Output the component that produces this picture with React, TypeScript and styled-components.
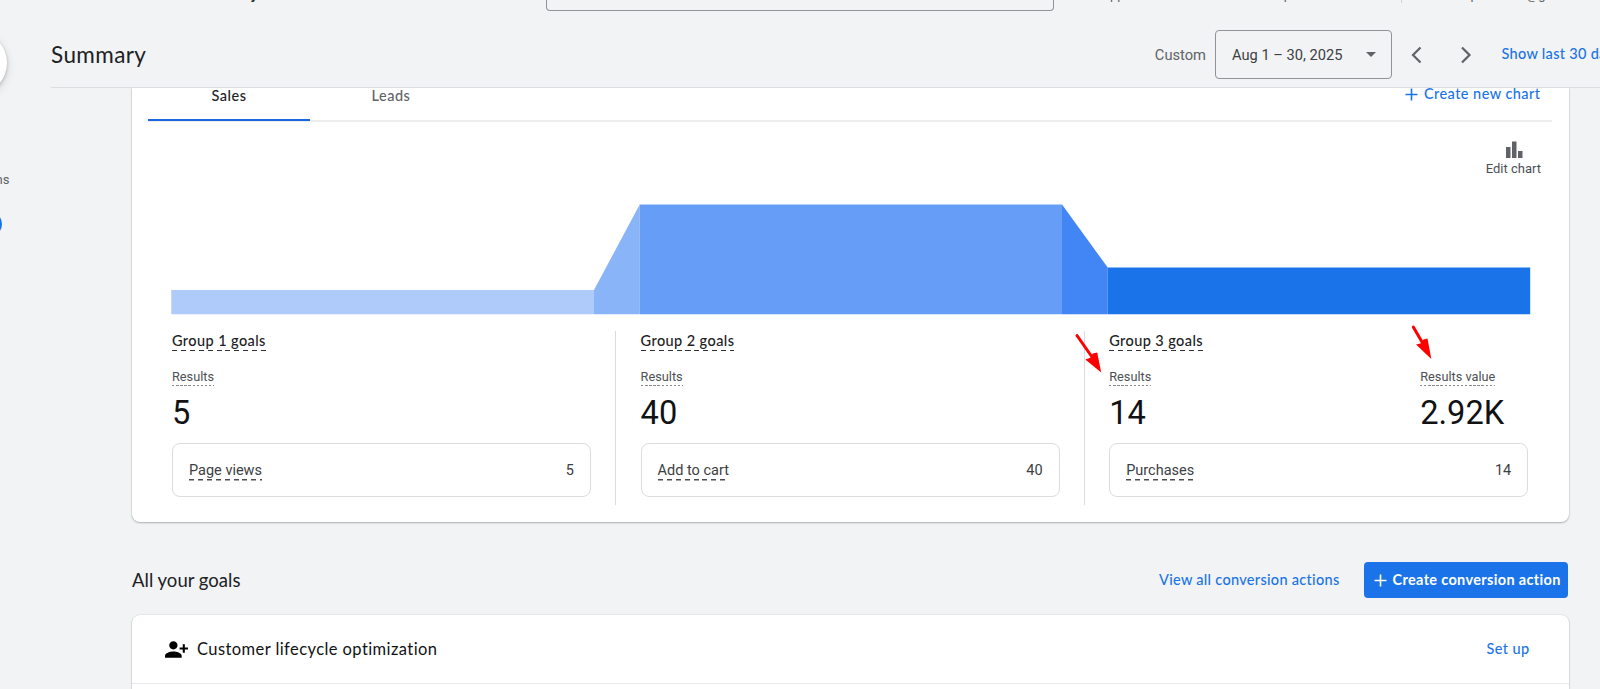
import React from 'react';
import styled, { createGlobalStyle } from 'styled-components';
import { MdPersonAddAlt1 } from 'react-icons/md';

const GlobalStyle = createGlobalStyle`
  *, *::before, *::after { box-sizing: border-box; }
  body { margin: 0; background: #f1f3f4; overflow: hidden; }
`;

const display = "Lato, 'Open Sans', sans-serif";
const blue = '#1a73e8';

const Page = styled.div`
  display: flex;
  width: 1600px;
  height: 689px;
  overflow: hidden;
  position: relative;
  background: #f1f3f4;
  color: #3c4043;
  font-family: Roboto, sans-serif;
  white-space: nowrap;
`;

const Rail = styled.nav`
  flex: none;
  width: 51px;
  padding-top: 31px;
  display: flex;
  flex-direction: column;
  align-items: flex-start;
`;

const RailButton = styled.div`
  width: 64px;
  height: 64px;
  margin-left: -57px;
  border-radius: 50%;
  background: #fff;
  box-shadow: 0 1px 3px rgba(60, 64, 67, 0.3), 0 3px 8px rgba(60, 64, 67, 0.18);
`;

const RailLabel = styled.span`
  width: 60px;
  margin: 77px 0 0 -50.5px;
  text-align: right;
  font-size: 13px;
  line-height: 16px;
  color: #5f6368;
`;

const RailBadge = styled.span`
  width: 24px;
  height: 24px;
  margin: 24px 0 0 -22px;
  border-radius: 50%;
  background: ${blue};
`;

const Main = styled.main`
  flex: 1;
  min-width: 0;
  display: flex;
  flex-direction: column;
`;

const AppBar = styled.div`
  height: 12px;
  flex: none;
  display: flex;
  align-items: flex-end;
  padding-bottom: 1px;
`;

const AppBarText = styled.span<{ $w: number; $bold?: boolean }>`
  width: ${p => p.$w}px;
  flex: none;
  align-self: flex-start;
  height: 12px;
  margin-top: -12px;
  font-size: 13px;
  line-height: 14px;
  font-weight: ${p => (p.$bold ? 700 : 400)};
  color: ${p => (p.$bold ? '#202124' : '#5f6368')};
`;

const AccountRule = styled.span`
  align-self: flex-start;
  width: 1px;
  height: 3px;
  background: #d0d3d6;
`;

const SearchBox = styled.div`
  width: 507.5px;
  height: 11px;
  flex: none;
  border: 1px solid #8f9296;
  border-top: 0;
  border-radius: 0 0 4px 4px;
`;

const Header = styled.header`
  height: 76px;
  flex: none;
  display: flex;
  align-items: center;
  border-bottom: 1px solid #dadce0;
`;

const Title = styled.h1`
  flex: 1;
  margin: 0;
  padding-top: 7px;
  height: 75px;
  font: 400 22.5px/71px ${display};
  letter-spacing: 0.4px;
  color: #202124;
`;

const RangeKind = styled.span`
  margin: 10px 9px 0 0;
  font-size: 14.7px;
  line-height: 18px;
  color: #5f6368;
`;

const DateField = styled.div`
  width: 177px;
  height: 49px;
  margin-top: 10px;
  padding: 0 15px 0 16px;
  display: flex;
  align-items: center;
  justify-content: space-between;
  border: 1px solid #8f9296;
  border-radius: 4px;
  font-size: 14.65px;
  color: #3c4043;
`;

const Pager = styled.div`
  display: flex;
  gap: 33px;
  margin: 10px 0 0 16.5px;
`;

const TextLink = styled.a<{ $spacing?: number }>`
  font: 500 14.5px/18px ${display};
  letter-spacing: ${p => p.$spacing ?? 0.4}px;
  color: ${blue};
`;

const ShowLast = styled(TextLink)`
  width: 98.5px;
  margin: 9px 0 0 28px;
  overflow: hidden;
`;

const Content = styled.section`
  padding-left: 81px;
  width: 1517.5px;
  display: flex;
  flex-direction: column;
`;

const cardShadow = '0 0 0 0.5px rgba(60,64,67,0.1), 0 1px 2px rgba(60, 64, 67, 0.34)';

const ChartCard = styled.div`
  height: 433.5px;
  display: flex;
  flex-direction: column;
  background: #fff;
  border-radius: 0 0 8px 8px;
  box-shadow: ${cardShadow};
  clip-path: inset(0 -6px -6px -6px);
`;

const Tabs = styled.div`
  height: 34px;
  flex: none;
  margin: 0 16.5px 0 16px;
  display: flex;
  border-bottom: 2px solid #ebedee;
`;

const Tab = styled.div<{ $active?: boolean }>`
  width: 162px;
  height: 33px;
  text-align: center;
  font: 500 14.5px/15px ${display};
  letter-spacing: 0.5px;
  color: ${p => (p.$active ? '#202124' : '#5f6368')};
  border-bottom: ${p => (p.$active ? '2px solid #1a66dc' : '0')};
`;

const NewChart = styled.div`
  margin-left: auto;
  display: flex;
  align-items: flex-start;
  gap: 6px;
  padding-right: 11.5px;
  line-height: 0;
  ${TextLink} { margin-top: -3px; }
`;

const EditChart = styled.div`
  align-self: flex-end;
  margin: 19px 27.5px 0 0;
  display: flex;
  flex-direction: column;
  align-items: center;
  gap: 3px;
  font-size: 13px;
  line-height: 16px;
  color: #4b4f53;
  svg { margin-left: 2px; }
`;

const Funnel = styled.svg`
  display: block;
  flex: none;
  width: 1360px;
  height: 111px;
  margin: 27px 0 0 39px;
`;

const Groups = styled.div`
  display: flex;
  flex: none;
  margin: 16px 0 0 40px;
  height: 174px;
`;

const Group = styled.div`
  width: 468.6px;
  flex: none;
  padding-right: 49.6px;
  display: flex;
  flex-direction: column;
  align-items: stretch;
  background: linear-gradient(#dadce0, #dadce0) 443px 0 / 1px 100% no-repeat;
  &:last-child { background: none; }
`;

const dashes = (color: string, on: number, period: number, h: number) =>
  `background: repeating-linear-gradient(90deg, ${color} 0 ${on}px, transparent ${on}px ${period}px) 0 100% / 100% ${h}px no-repeat;`;

const GroupTitle = styled.span`
  align-self: flex-start;
  height: 20px;
  font: 500 14.5px/20px ${display};
  letter-spacing: 0.41px;
  color: #202124;
  ${dashes('#303134', 5, 8.9, 1.5)}
`;

const Metrics = styled.div`
  display: grid;
  grid-template-columns: 311px 1fr;
  margin-top: 17px;
`;

const Metric = styled.div`
  display: flex;
  flex-direction: column;
  align-items: flex-start;
`;

const MetricLabel = styled.span`
  height: 18px;
  font-size: 12.75px;
  line-height: 17px;
  color: #4d5155;
  ${dashes('#85898c', 2.4, 4.1, 1.5)}
`;

const MetricValue = styled.span`
  font-size: 32.6px;
  line-height: 38px;
  margin-top: 7.5px;
  color: #111214;
`;

const GoalBox = styled.div`
  height: 54px;
  margin-top: 11.5px;
  padding: 0 16px;
  display: flex;
  align-items: center;
  justify-content: space-between;
  border: 1px solid #dadce0;
  border-radius: 8px;
  font-size: 14.5px;
`;

const GoalName = styled.span`
  height: 20px;
  line-height: 20px;
  margin-top: 1px;
  ${dashes('#4a4d51', 5, 8.9, 1.5)}
`;

const GoalsHeader = styled.div`
  height: 36px;
  margin-top: 40.5px;
  display: flex;
  align-items: center;
`;

const SectionTitle = styled.h2`
  flex: 1;
  margin: 0;
  font: 400 18.5px/24px ${display};
  letter-spacing: 0.02px;
  color: #202124;
`;

const CreateButton = styled.button`
  width: 204.5px;
  height: 36px;
  margin: 0 0.5px 0 24px;
  padding: 0 0 0 10px;
  display: flex;
  align-items: center;
  gap: 6px;
  border: 0;
  border-radius: 4px;
  background: ${blue};
  color: #fff;
  font: 700 14.5px/18px ${display};
  letter-spacing: 0.34px;
`;

const GoalsCard = styled.div`
  height: 100px;
  margin-top: 17px;
  background: #fff;
  border-radius: 8px 8px 0 0;
  box-shadow: ${cardShadow};
`;

const GoalRow = styled.div`
  height: 69px;
  display: flex;
  align-items: center;
  padding: 0 39px 0 32px;
  border-bottom: 1.5px solid #e8eaed;
`;

const GoalRowTitle = styled.span`
  flex: 1;
  margin: -1px 0 0 8px;
  font: 400 16.5px/20px ${display};
  letter-spacing: 0.42px;
  color: #111214;
`;

const Annotations = styled.svg`
  position: absolute;
  left: 1070px;
  top: 320px;
  width: 370px;
  height: 60px;
  pointer-events: none;
`;

const Plus = ({ color }: { color: string }) => (
  <svg width="13" height="13" viewBox="0 0 13 13">
    <path d="M6.5 .5v12M.5 6.5h12" stroke={color} strokeWidth="1.6" fill="none" />
  </svg>
);

const groups = [
  { name: 'Group 1 goals', goal: 'Page views', metrics: [['Results', '5']] },
  { name: 'Group 2 goals', goal: 'Add to cart', metrics: [['Results', '40']] },
  { name: 'Group 3 goals', goal: 'Purchases', metrics: [['Results', '14'], ['Results value', '2.92K']] },
];

export default function App() {
  return (
    <Page>
      <GlobalStyle />
      <Rail>
        <RailButton />
        <RailLabel>ns</RailLabel>
        <RailBadge />
      </Rail>
      <Main>
        <AppBar>
          <AppBarText $w={201} />
          <AppBarText $w={294} $bold>j</AppBarText>
          <SearchBox />
          <AppBarText $w={48} />
          <AppBarText $w={163}>Appearance</AppBarText>
          <AppBarText $w={136}>Help</AppBarText>
          <AccountRule />
          <AppBarText $w={69} />
          <AppBarText $w={56}>p</AppBarText>
          <AppBarText $w={30}>@g</AppBarText>
        </AppBar>
        <Header>
          <Title>Summary</Title>
          <RangeKind>Custom</RangeKind>
          <DateField>
            Aug 1 – 30, 2025
            <svg width="10" height="5" viewBox="0 0 10 5"><path d="M0 0h10L5 5z" fill="#5f6368" /></svg>
          </DateField>
          <Pager>
            <svg width="16" height="18" viewBox="0 0 16 18"><path d="M11.5 1.5 4 9l7.5 7.5" fill="none" stroke="#5f6368" strokeWidth="2.2" /></svg>
            <svg width="16" height="18" viewBox="0 0 16 18"><path d="M4 1.5 11.5 9 4 16.5" fill="none" stroke="#5f6368" strokeWidth="2.2" /></svg>
          </Pager>
          <ShowLast $spacing={0.3}>Show last 30 days</ShowLast>
        </Header>
        <Content>
          <ChartCard>
            <Tabs>
              <Tab $active>Sales</Tab>
              <Tab>Leads</Tab>
              <NewChart>
                <Plus color={blue} />
                <TextLink $spacing={0.45}>Create new chart</TextLink>
              </NewChart>
            </Tabs>
            <EditChart>
              <svg width="17" height="17" viewBox="0 0 17 17">
                <path d="M0 6h4.500v11H0zM6 .5h4.500V17H6zM12 10h4.500v7H12z" fill="#5f6368" />
              </svg>
              Edit chart
            </EditChart>
            <Funnel viewBox="0 0 1360 111">
              <path d="M.3 86H423v24.300H.3z" fill="#aecbfa" />
              <path d="M423 86 468.700 .5v109.800H423z" fill="#8ab4f8" />
              <path d="M468.700 .5H891v109.800H468.700z" fill="#669df6" />
              <path d="M891 .5 936.700 63.500v46.800H891z" fill="#4285f4" />
              <path d="M936.700 63.500H1359.200v46.800H936.700z" fill="#1a73e8" />
            </Funnel>
            <Groups>
              {groups.map(g => (
                <Group key={g.name}>
                  <GroupTitle>{g.name}</GroupTitle>
                  <Metrics>
                    {g.metrics.map(([label, value]) => (
                      <Metric key={label}>
                        <MetricLabel>{label}</MetricLabel>
                        <MetricValue>{value}</MetricValue>
                      </Metric>
                    ))}
                  </Metrics>
                  <GoalBox>
                    <GoalName>{g.goal}</GoalName>
                    <span>{g.metrics[0][1]}</span>
                  </GoalBox>
                </Group>
              ))}
            </Groups>
          </ChartCard>
          <GoalsHeader>
            <SectionTitle>All your goals</SectionTitle>
            <TextLink $spacing={0.3}>View all conversion actions</TextLink>
            <CreateButton>
              <Plus color="#fff" />
              Create conversion action
            </CreateButton>
          </GoalsHeader>
          <GoalsCard>
            <GoalRow>
              <MdPersonAddAlt1 size={25} color="#000" />
              <GoalRowTitle>Customer lifecycle optimization</GoalRowTitle>
              <TextLink>Set up</TextLink>
            </GoalRow>
          </GoalsCard>
        </Content>
      </Main>
      <Annotations viewBox="0 0 370 60">
        <path d="M7 15.500 22 37" stroke="#f00" strokeWidth="3" strokeLinecap="round" />
        <path d="M31.200 52.500 15.300 39.500 20.300 37.800 22.800 33.500 27.200 32.500z" fill="#f00" />
        <path d="M343.300 7 352 22" stroke="#f00" strokeWidth="3" strokeLinecap="round" />
        <path d="M361.300 39 346 24.500 350.500 23.500 353.500 19.500 357.500 18.500z" fill="#f00" />
      </Annotations>
    </Page>
  );
}
